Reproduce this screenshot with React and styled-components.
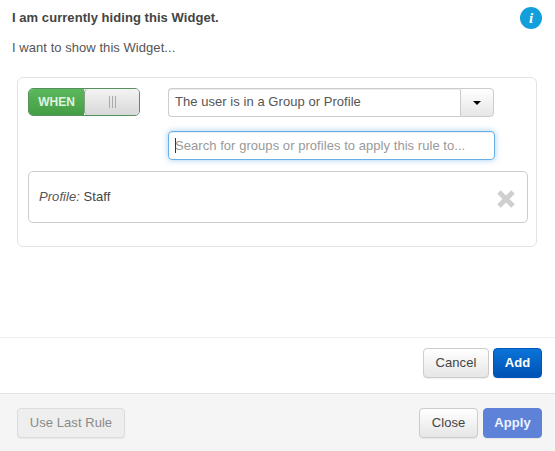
import React from "react";
import styled, { createGlobalStyle } from "styled-components";

const Global = createGlobalStyle`
  html, body { margin: 0; padding: 0; background: #fff; }
  body { font-family: "Liberation Sans", Arial, sans-serif; font-size: 13px; letter-spacing: 0.05px; color: #333; }
  * { box-sizing: border-box; }
`;

const Modal = styled.div`
  width: 555px;
  height: 451px;
  display: flex;
  flex-direction: column;
  overflow: hidden;
`;

const Body = styled.div`
  height: 337px;
  padding: 10px 12px 0 12px;
`;

const TitleRow = styled.div`
  display: flex;
  justify-content: space-between;
  align-items: flex-start;
  height: 30px;
`;

const Title = styled.h4`
  margin: 0;
  font-size: 13px;
  line-height: 15px;
  font-weight: bold;
  color: #444;
`;

const InfoBadge = styled.span`
  width: 22px;
  height: 22px;
  margin: -3px 1px 0 0;
  border-radius: 50%;
  background: #129fdb;
  color: #fff;
  font-family: "Liberation Serif", serif;
  font-size: 15px;
  font-weight: bold;
  font-style: italic;
  line-height: 22px;
  text-align: center;
`;

const Lead = styled.p`
  margin: 0 0 22px;
  font-size: 13px;
  line-height: 15px;
  color: #555;
`;

const Panel = styled.div`
  margin-left: 5px;
  width: 520px;
  height: 170px;
  padding: 10px;
  border: 1px solid #e3e3e3;
  border-radius: 6px;
`;

const RuleRow = styled.div`
  display: flex;
  align-items: flex-start;
  gap: 28px;
`;

const Toggle = styled.div`
  display: flex;
  width: 112px;
  height: 28px;
  border: 1px solid #5a8f5f;
  border-radius: 5px;
  overflow: hidden;
  flex-shrink: 0;
`;

const ToggleOn = styled.span`
  width: 55px;
  background: linear-gradient(#5cb85c, #449d44);
  color: #e0f2e0;
  font-size: 12px;
  font-weight: bold;
  letter-spacing: 0;
  line-height: 26px;
  text-align: center;
`;

const ToggleHandle = styled.span`
  flex: 1;
  display: flex;
  align-items: center;
  justify-content: center;
  gap: 2px;
  border-left: 1px solid #7f9f85;
  border-radius: 4px 0 0 4px;
  background: linear-gradient(#f3f3f3, #d8d8d8);
`;

const Grip = styled.i`
  width: 1px;
  height: 12px;
  background: #aaa;
`;

const Fields = styled.div`
  display: flex;
  flex-direction: column;
  gap: 14px;
`;

const SelectGroup = styled.div`
  display: flex;
  width: 326px;
  height: 29px;
`;

const SelectValue = styled.div`
  flex: 1;
  padding: 0 6px;
  border: 1px solid #ccc;
  border-right: 0;
  border-radius: 4px 0 0 4px;
  box-shadow: inset 0 1px 1px rgba(0, 0, 0, 0.075);
  font-size: 13px;
  line-height: 25px;
  color: #555;
`;

const Caret = styled.button`
  width: 34px;
  padding: 0;
  display: flex;
  align-items: center;
  justify-content: center;
  border: 1px solid #ccc;
  border-radius: 0 4px 4px 0;
  background: linear-gradient(#fff, #e6e6e6);
  &::after {
    content: "";
    border-top: 4px solid #000;
    border-left: 4px solid transparent;
    border-right: 4px solid transparent;
  }
`;

const Search = styled.div`
  position: relative;
  width: 327px;
  height: 29px;
  padding: 0 6px;
  border: 1px solid #66afe9;
  border-radius: 4px;
  box-shadow: inset 0 1px 1px rgba(0, 0, 0, 0.075), 0 0 6px rgba(102, 175, 233, 0.6);
  font-size: 13px;
  line-height: 27px;
  color: #999;
`;

const Cursor = styled.span`
  display: inline-block;
  width: 1px;
  height: 15px;
  margin-right: -1px;
  background: #333;
  vertical-align: -3px;
`;

const ProfileBox = styled.div`
  display: flex;
  align-items: center;
  justify-content: space-between;
  width: 500px;
  height: 52px;
  margin-top: 11px;
  padding: 0 10px 2px;
  border: 1px solid #ccc;
  border-radius: 5px;
  font-size: 13px;
  color: #444;
`;

const ProfileLabel = styled.em`
  color: #555;
`;

const Remove = styled.svg`
  width: 20px;
  height: 20px;
  margin: 5px 1px 0 0;
`;

const Footer = styled.div`
  display: flex;
  align-items: flex-start;
  justify-content: ${(p) => (p.$split ? "space-between" : "flex-end")};
  gap: 4px;
  border-top: 1px solid ${(p) => (p.$grey ? "#e2e2e2" : "#eeeeee")};
  background: ${(p) => (p.$grey ? "#f5f5f5" : "#fff")};
  padding: ${(p) => (p.$grey ? "14px 13px 0 17px" : "10px 13px 0 0")};
  height: ${(p) => (p.$grey ? "58px" : "56px")};
`;

const Group = styled.div`
  display: flex;
  gap: 5px;
`;

const Button = styled.button`
  height: 30px;
  width: ${(p) => p.$w}px;
  padding: 0 0 2px;
  border-radius: 4px;
  font-family: inherit;
  font-size: 13px;
  letter-spacing: inherit;
  border: 1px solid #ccc;
  color: #444;
  background: linear-gradient(#fff, #e6e6e6);
  box-shadow: 0 1px 1px rgba(0, 0, 0, 0.06);
`;

const PrimaryButton = styled(Button)`
  border-color: #0055b8;
  background: linear-gradient(#0a74d8, #0052b4);
  color: #fff;
  font-weight: bold;
`;

const ApplyButton = styled(Button)`
  border-color: #5d82d8;
  background: #5d82d8;
  color: #eef3ff;
  font-weight: bold;
`;

const LastRule = styled(Button)`
  background: #eeeeee;
  border-color: #dcdcdc;
  color: #8a8a8a;
`;

const App = () => (
  <Modal>
    <Global />
    <Body>
      <TitleRow>
        <Title>I am currently hiding this Widget.</Title>
        <InfoBadge>i</InfoBadge>
      </TitleRow>
      <Lead>I want to show this Widget...</Lead>
      <Panel>
        <RuleRow>
          <Toggle>
            <ToggleOn>WHEN</ToggleOn>
            <ToggleHandle>
              <Grip />
              <Grip />
              <Grip />
            </ToggleHandle>
          </Toggle>
          <Fields>
            <SelectGroup>
              <SelectValue>The user is in a Group or Profile</SelectValue>
              <Caret />
            </SelectGroup>
            <Search>
              <Cursor />
              Search for groups or profiles to apply this rule to...
            </Search>
          </Fields>
        </RuleRow>
        <ProfileBox>
          <span>
            <ProfileLabel>Profile:</ProfileLabel> Staff
          </span>
          <Remove viewBox="0 0 20 20">
            <path d="M3 3 L17 17 M17 3 L3 17" stroke="#cfcfcf" strokeWidth="5" />
          </Remove>
        </ProfileBox>
      </Panel>
    </Body>
    <Footer>
      <Button $w={66}>Cancel</Button>
      <PrimaryButton $w={49}>Add</PrimaryButton>
    </Footer>
    <Footer $grey $split>
      <LastRule $w={108}>Use Last Rule</LastRule>
      <Group>
        <Button $w={59}>Close</Button>
        <ApplyButton $w={59}>Apply</ApplyButton>
      </Group>
    </Footer>
  </Modal>
);

export default App;
